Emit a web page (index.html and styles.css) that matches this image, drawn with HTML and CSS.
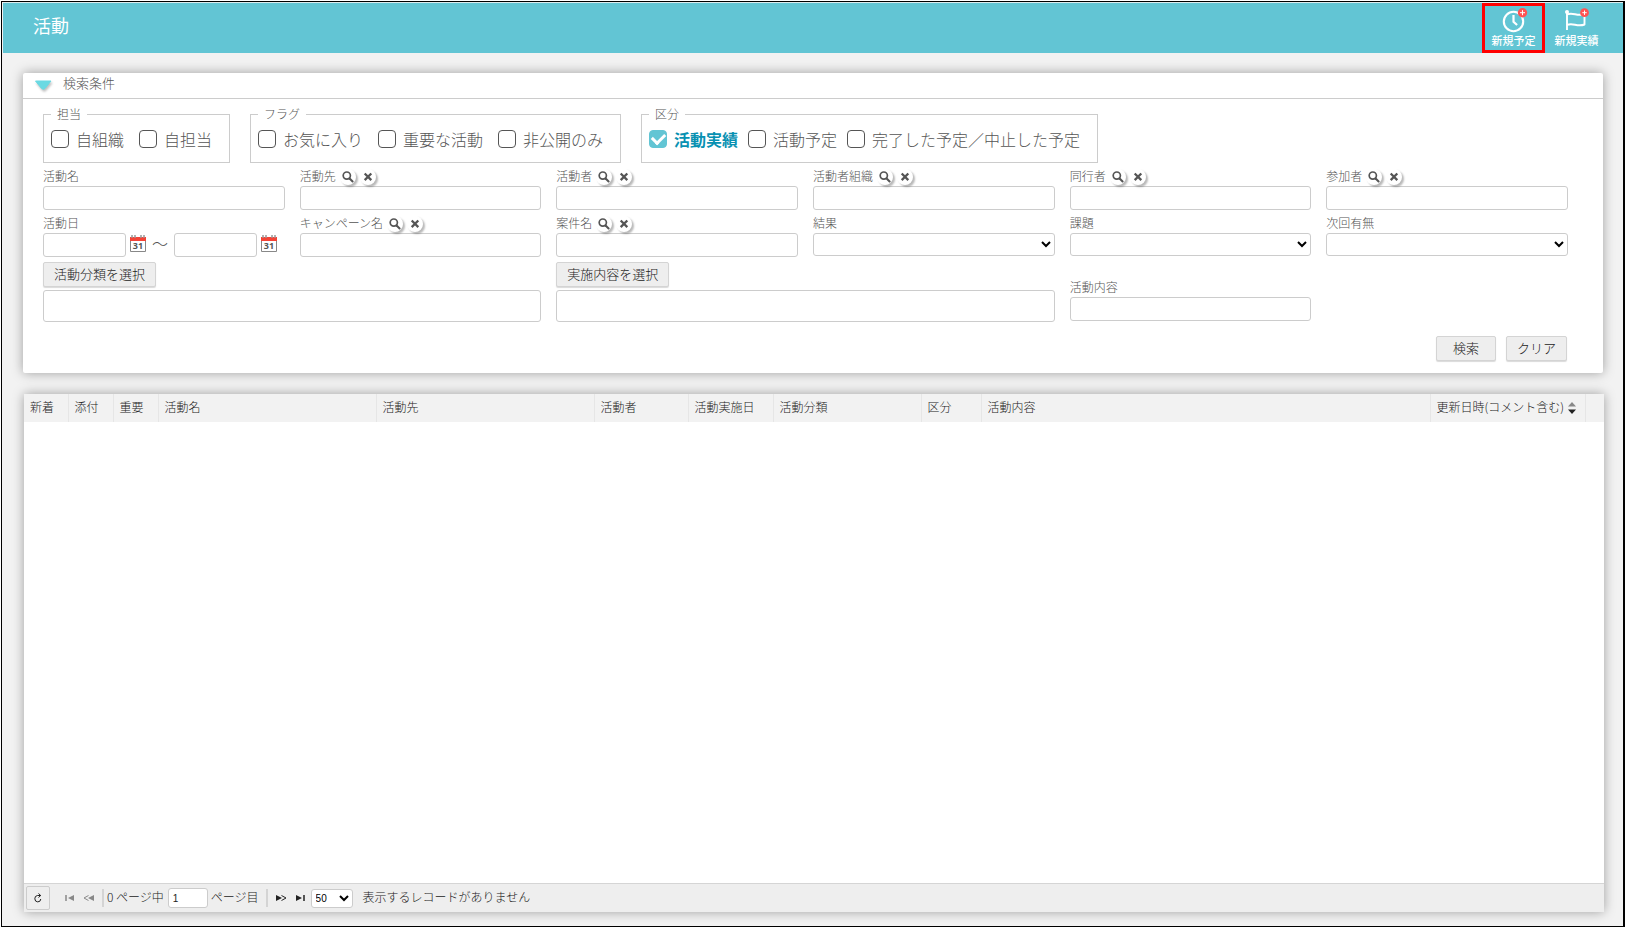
FILE: index.html
```html
<!DOCTYPE html>
<html lang="ja">
<head>
<meta charset="utf-8">
<title>活動</title>
<link rel="stylesheet" href="styles.css">
</head>
<body>
<svg class="defs" width="0" height="0" aria-hidden="true">
  <symbol id="i-search" viewBox="0 0 16 16"><circle cx="6.8" cy="6.6" r="3.6" fill="none" stroke="#555" stroke-width="1.7"/><path d="M9.6 9.4l3 3" stroke="#555" stroke-width="2.1" stroke-linecap="round"/></symbol>
  <symbol id="i-x" viewBox="0 0 16 16"><path d="M4.700 4.500l6.600 6.600M11.300 4.500l-6.600 6.600" stroke="#555" stroke-width="2.3"/></symbol>
</svg>
<div class="frame">
  <header class="topbar">
    <h1>活動</h1>
    <nav class="actions">
      <button type="button" class="action marked">
        <svg width="28" height="26" viewBox="0 0 28 26"><circle cx="13.500" cy="14.500" r="9.700" fill="none" stroke="#fff" stroke-width="2.100"/><path d="M13.500 8v6.800l3.600 3.200" fill="none" stroke="#fff" stroke-width="2.200"/><circle cx="22.500" cy="5.700" r="4.700" fill="#ff5252"/><path d="M20 5.700h5M22.500 3.200v5" stroke="#fff"/></svg>
        <span>新規予定</span>
      </button>
      <button type="button" class="action">
        <svg width="28" height="26" viewBox="0 0 28 26"><circle cx="4" cy="5" r="2" fill="#fff"/><path d="M4 5v18M4 7.500c6-3 10 2.500 17.500-.5v10.500c-7.500 3-11.500-2.500-17.500.5" fill="none" stroke="#fff" stroke-width="1.900" stroke-linejoin="round"/><circle cx="21.500" cy="5.700" r="4.400" fill="#ff5252"/><path d="M19.300 5.700h4.400M21.500 3.500v4.400" stroke="#fff"/></svg>
        <span>新規実績</span>
      </button>
    </nav>
  </header>
  <main class="page">
    <form class="panel search">
      <h2><svg width="20" height="14" viewBox="0 0 20 14"><path d="M1.500 2h15.500l-6 7.500q-1.700 1.500-3.400 0z" fill="#6bd9e2" stroke="#6bd9e2" stroke-linejoin="round"/></svg><span>検索条件</span></h2>
      <div class="body">
        <div class="groups">
          <fieldset><legend>担当</legend>
            <label><input type="checkbox">自組織</label><label><input type="checkbox">自担当</label>
          </fieldset>
          <fieldset><legend>フラグ</legend>
            <label><input type="checkbox">お気に入り</label><label><input type="checkbox">重要な活動</label><label><input type="checkbox">非公開のみ</label>
          </fieldset>
          <fieldset class="kinds"><legend>区分</legend>
            <label><input type="checkbox" checked><span>活動実績</span></label><label><input type="checkbox">活動予定</label><label><input type="checkbox">完了した予定／中止した予定</label>
          </fieldset>
        </div>
        <div class="grid">
          <div class="field"><div class="cap"><label for="f1">活動名</label></div><input id="f1" type="text"></div>
          <div class="field"><div class="cap"><label for="f2">活動先</label><button type="button" class="mini" aria-label="検索"><svg><use href="#i-search"/></svg></button><button type="button" class="mini" aria-label="クリア"><svg><use href="#i-x"/></svg></button></div><input id="f2" type="text"></div>
          <div class="field"><div class="cap"><label for="f3">活動者</label><button type="button" class="mini" aria-label="検索"><svg><use href="#i-search"/></svg></button><button type="button" class="mini" aria-label="クリア"><svg><use href="#i-x"/></svg></button></div><input id="f3" type="text"></div>
          <div class="field"><div class="cap"><label for="f4">活動者組織</label><button type="button" class="mini" aria-label="検索"><svg><use href="#i-search"/></svg></button><button type="button" class="mini" aria-label="クリア"><svg><use href="#i-x"/></svg></button></div><input id="f4" type="text"></div>
          <div class="field"><div class="cap"><label for="f5">同行者</label><button type="button" class="mini" aria-label="検索"><svg><use href="#i-search"/></svg></button><button type="button" class="mini" aria-label="クリア"><svg><use href="#i-x"/></svg></button></div><input id="f5" type="text"></div>
          <div class="field"><div class="cap"><label for="f6">参加者</label><button type="button" class="mini" aria-label="検索"><svg><use href="#i-search"/></svg></button><button type="button" class="mini" aria-label="クリア"><svg><use href="#i-x"/></svg></button></div><input id="f6" type="text"></div>

          <div class="field"><div class="cap"><label for="f7">活動日</label></div>
            <div class="dates"><input id="f7" type="text"><button type="button" class="cal" aria-label="開始日を選択"><svg viewBox="0 0 16 17"><path d="M.5 4v12.500h15V4" fill="#fff" stroke="#888"/><path d="M0 2h16v4H0z" fill="#f44336"/><path d="M2 0v3M5 0v3M11 0v3M14 0v3" stroke="#999" stroke-width="1.500"/><text x="8" y="14" text-anchor="middle">31</text></svg></button><span class="tilde">～</span><input type="text" aria-label="活動日（終了）"><button type="button" class="cal" aria-label="終了日を選択"><svg viewBox="0 0 16 17"><path d="M.5 4v12.500h15V4" fill="#fff" stroke="#888"/><path d="M0 2h16v4H0z" fill="#f44336"/><path d="M2 0v3M5 0v3M11 0v3M14 0v3" stroke="#999" stroke-width="1.500"/><text x="8" y="14" text-anchor="middle">31</text></svg></button></div></div>
          <div class="field"><div class="cap"><label for="f8">キャンペーン名</label><button type="button" class="mini" aria-label="検索"><svg><use href="#i-search"/></svg></button><button type="button" class="mini" aria-label="クリア"><svg><use href="#i-x"/></svg></button></div><input id="f8" type="text"></div>
          <div class="field"><div class="cap"><label for="f9">案件名</label><button type="button" class="mini" aria-label="検索"><svg><use href="#i-search"/></svg></button><button type="button" class="mini" aria-label="クリア"><svg><use href="#i-x"/></svg></button></div><input id="f9" type="text"></div>
          <div class="field"><div class="cap"><label for="f10">結果</label></div><select id="f10"><option></option></select></div>
          <div class="field"><div class="cap"><label for="f11">課題</label></div><select id="f11"><option></option></select></div>
          <div class="field"><div class="cap"><label for="f12">次回有無</label></div><select id="f12"><option></option></select></div>

          <div class="pick"><button type="button" class="btn">活動分類を選択</button><div class="box"></div></div>
          <div class="pick"><button type="button" class="btn">実施内容を選択</button><div class="box"></div></div>
          <div class="field low"><div class="cap"><label for="f13">活動内容</label></div><input id="f13" type="text"></div>
        </div>
        <div class="submit"><button type="button" class="btn">検索</button><button type="reset" class="btn">クリア</button></div>
      </div>
    </form>

    <section class="panel results">
      <table>
        <colgroup><col class="w-first"><col class="w-s"><col class="w-s"><col class="w-l"><col class="w-l"><col class="w-person"><col class="w-date"><col class="w-class"><col class="w-kind"><col><col class="w-upd"><col class="w-end"></colgroup>
        <thead><tr><th>新着</th><th>添付</th><th>重要</th><th>活動名</th><th>活動先</th><th>活動者</th><th>活動実施日</th><th>活動分類</th><th>区分</th><th>活動内容</th><th>更新日時(コメント含む)<svg class="sort" width="8" height="12" viewBox="0 0 8 12"><path d="M4 0l4 4.500H0z" fill="#888"/><path d="M0 7.500h8L4 12z" fill="#222"/></svg></th><th></th></tr></thead>
      </table>
      <footer class="pager">
        <button type="button" class="reload" aria-label="再読み込み"><svg width="10" height="10" viewBox="0 0 10 10" fill="none" stroke="#222"><path d="M7.500 2.500H4.500a3 3.200 0 1 0 3.300 3.500M5.500.5l2.200 2-2.200 2"/></svg></button>
        <button type="button" class="nav" aria-label="最初"><svg width="10" height="6" viewBox="0 0 10 6"><path d="M1 0v6" stroke="#888" stroke-width="1.500"/><path d="M9 0v6L3 3z" fill="#888"/></svg></button>
        <button type="button" class="nav" aria-label="前へ"><svg width="12" height="6" viewBox="0 0 12 6"><path d="M5.500.5L1 3l4.500 2.500" fill="none" stroke="#888"/><path d="M11 0v6L5 3z" fill="#888"/></svg></button>
        <i class="sep"></i>
        <label for="pg">0 ページ中</label><input id="pg" type="text" value="1"><span>ページ目</span>
        <i class="sep far"></i>
        <button type="button" class="nav" aria-label="次へ"><svg width="12" height="6" viewBox="0 0 12 6"><path d="M6.500.5L11 3 6.500 5.500" fill="none" stroke="#222"/><path d="M1 0v6l6-3z" fill="#222"/></svg></button>
        <button type="button" class="nav" aria-label="最後"><svg width="10" height="6" viewBox="0 0 10 6"><path d="M9 0v6" stroke="#222" stroke-width="1.500"/><path d="M1 0v6l6-3z" fill="#222"/></svg></button>
        <select aria-label="表示件数"><option>50</option></select>
        <span class="msg">表示するレコードがありません</span>
      </footer>
    </section>
  </main>
</div>
</body>
</html>
```
FILE: styles.css
```css
* { box-sizing: border-box; }
body {
  margin: 0;
  background: #fff;
  color: #555;
  font: 300 12px/18px "Noto Sans CJK JP", sans-serif;
}
button, input, select { font: inherit; color: inherit; margin: 0; }
button { padding: 0; border: 0; background: none; }
svg { display: block; }
.defs { position: absolute; }

.frame {
  display: flex;
  flex-direction: column;
  min-height: calc(100vh - 1px);
  margin: 1px 0 0 1px;
  border: 1px solid #000;
  border-right-width: 2px;
  background: #f2f2f2;
}

.topbar {
  display: flex;
  justify-content: space-between;
  height: 51px;
  margin: 0 0 0 1px;
  border-top: 1px solid #dcecef;
  background: #62c5d4;
  color: #fff;
}
.topbar h1 { margin: 0; padding: 9px 30px; font-size: 18px; line-height: 26px; font-weight: 400; }
.actions { display: flex; padding-right: 15px; }
.action {
  display: flex;
  flex-direction: column;
  align-items: center;
  width: 63px;
  border: 3px solid transparent;
  font-size: 11px;
  line-height: 14px;
  font-weight: 500;
}
.action svg { margin-top: 1px; }
.action.marked { border-color: #f00; }

.page { flex: 1; display: flex; flex-direction: column; gap: 21px; padding: 20px 20px 14px 21px; }
.panel { background: #fff; border-radius: 2px; box-shadow: 0 0 12px rgba(0, 0, 0, .35); }
.search h2 {
  display: flex;
  align-items: center;
  gap: 9px;
  height: 26px;
  margin: 0;
  padding: 0 11px;
  border-bottom: 1px solid #ccc;
  font-size: 13px;
  font-weight: 300;
}
.search h2 span { padding-bottom: 5px; }
.search h2 svg { filter: drop-shadow(1px 2px 1px rgba(0, 0, 0, .25)); }
.body { padding: 6px 36px 12px 20px; }

.groups { display: flex; gap: 20px; }
fieldset {
  display: flex;
  gap: 15px;
  height: 58px;
  margin: 0;
  padding: 2px 17px 0 7px;
  border: 1px solid #ccc;
}
fieldset.kinds { gap: 10px; }
legend { padding: 0 6px 2px; line-height: 17px; }
fieldset label { display: flex; align-items: center; gap: 7px; height: 26px; font-size: 16px; white-space: nowrap; }
fieldset label span { color: #0891b2; font-weight: 700; }
input[type=checkbox] {
  appearance: none;
  width: 18px;
  height: 18px;
  border: 1px solid #555;
  border-radius: 4px;
  background: #fff;
}
input[type=checkbox]:checked { display: grid; place-items: center; border-color: #62c5d4; background: #62c5d4; }
input[type=checkbox]:checked::before {
  content: "";
  width: 10px;
  height: 6px;
  margin-bottom: 3px;
  border: solid #fff;
  border-width: 0 0 3px 3px;
  transform: rotate(-45deg);
}

.grid { display: grid; grid-template-columns: repeat(6, 1fr); gap: 5px 15px; margin-right: -1px; padding-top: 5px; }
.cap { display: flex; align-items: center; height: 18px; }
.cap label { padding-bottom: 2px; }
.field input, .field select {
  display: block;
  width: 100%;
  height: 24px;
  border: 1px solid #ccc;
  border-radius: 3px;
  background: #fff;
  color: #000;
}
.field select { height: 23px; }
.mini {
  width: 16px;
  height: 16px;
  margin-left: 4px;
  border-radius: 50%;
  background: #fff;
  box-shadow: 2px 2px 2px rgba(0, 0, 0, .28);
}
.mini svg { width: 16px; height: 16px; }
.dates { display: flex; align-items: center; }
.field .dates input { width: 83px; }
.cal { margin-left: 4px; padding-bottom: 4px; }
.cal svg { width: 16px; height: 17px; font: bold 9px "Open Sans", sans-serif; fill: #555; }
.tilde { width: 28px; padding-bottom: 4px; text-align: center; font-size: 16px; }
.pick { grid-column: span 2; }
.btn {
  min-width: 60px;
  height: 25px;
  padding: 0 10px 2px;
  border: 1px solid #d4d4d4;
  border-radius: 2px;
  background: #eee;
  box-shadow: 0 1px 1px rgba(0, 0, 0, .15);
  color: #222;
  font-size: 13px;
  line-height: 20px;
}
.pick .btn { display: block; }
.box { height: 32px; margin-top: 3px; border: 1px solid #ccc; border-radius: 3px; }
.low { align-self: end; padding-bottom: 1px; }
.submit { display: flex; justify-content: flex-end; gap: 10px; padding-top: 14px; }

.results { flex: 1; display: flex; flex-direction: column; margin: 0 -1px 0 1px; }
table { width: 100%; table-layout: fixed; border-collapse: collapse; }
.w-first { width: 44px; }
.w-s { width: 45px; }
.w-l { width: 218px; }
.w-person { width: 94px; }
.w-date { width: 85px; }
.w-class { width: 148px; }
.w-kind { width: 60px; }
.w-upd { width: 155px; }
.w-end { width: 19px; }
th {
  height: 28px;
  padding: 0 0 3px 6px;
  border-right: 1px solid #e6e6e6;
  background: #f2f2f2;
  color: #222;
  font-weight: 300;
  text-align: left;
  white-space: nowrap;
}
th:last-child { border-right: 0; padding: 0; }
.sort { display: inline-block; margin-left: 4px; vertical-align: middle; }
.pager {
  display: flex;
  align-items: center;
  height: 29px;
  margin-top: auto;
  padding-left: 2px;
  border-top: 1px solid #d5d5d5;
  background: #eee;
  color: #222;
}
.pager label, .pager span { padding-bottom: 2px; }
.reload { display: grid; place-items: center; width: 24px; height: 24px; margin-right: 7px; border: 1px solid #ccc; border-radius: 2px; }
.nav { margin-left: 8px; }
.sep { width: 2px; height: 18px; margin: 0 3px 0 7px; background: #d4d4d4; }
.sep.far { margin: 0 -1px 0 7px; }
.pager input { width: 40px; height: 20px; margin: 0 3px 0 4px; padding: 0 4px; border: 1px solid #ccc; border-radius: 3px; background: #fff; font: 10px "Liberation Sans", sans-serif; }
.pager select { width: 42px; height: 19px; margin-left: 6px; border: 1px solid #ccc; border-radius: 3px; background: #fff; color: #000; font: 10px "Liberation Sans", sans-serif; }
.pager .msg { margin-left: 10px; }
```
